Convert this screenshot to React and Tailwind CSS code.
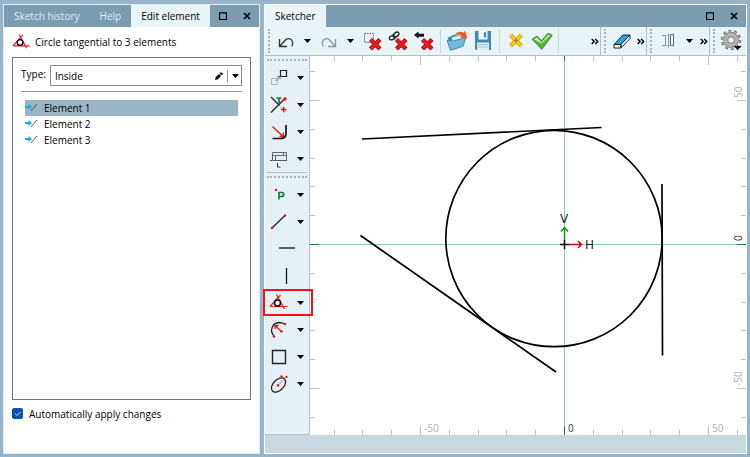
import { useState } from "react";

const elements = ["Element 1", "Element 2", "Element 3"];

const Icon = ({ size = 20, children, className = "" }) => (
    <svg width={size} height={size} viewBox="0 0 20 20" fill="none" aria-hidden="true" className={`shrink-0 ${className}`}>
        {children}
    </svg>
);

const Caret = () => (
    <svg width="7" height="4" viewBox="0 0 7 4" aria-hidden="true">
        <path d="M0 0h7L3.500 4z" fill="#000" />
    </svg>
);

const MaximizeIcon = () => (
    <svg width="8" height="8" viewBox="0 0 8 8" fill="none" aria-hidden="true">
        <path d="M.5 1h7v6.500h-7zM0 .8h8" stroke="#000" strokeWidth="1.2" />
    </svg>
);

const CloseIcon = () => (
    <svg width="8" height="8" viewBox="0 0 8 8" fill="none" aria-hidden="true">
        <path d="M1 1l6 6M7 1L1 7" stroke="#000" strokeWidth="1.7" />
    </svg>
);

const RedCross = () => (
    <>
        <path d="M8.5 8.5l9.5 9.5M18 8.5L8.5 18" stroke="#8d0f12" strokeWidth="4.4" />
        <path d="M8.7 8.7l9 9M17.8 8.7l-9 9" stroke="#e81c1c" strokeWidth="2.8" />
    </>
);

const UndoIcon = () => (
    <Icon>
        <path d="M3.500 8v7.500H11M4 15l5.500-6c2.300-2.300 6.300-1.300 7 1.700.5 1.800.2 3.300-.8 4.800" stroke="#333" strokeWidth="1.300" />
    </Icon>
);

const RedoIcon = () => (
    <Icon>
        <path d="M16.500 8v7.500H9M16 15l-5.500-6c-2.300-2.300-6.300-1.300-7 1.700-.5 1.800-.2 3.300.8 4.800" stroke="#87959c" strokeWidth="1.300" />
    </Icon>
);

const DeleteAreaIcon = () => (
    <Icon>
        <path d="M2.500 2.500h9v9h-9z" stroke="#666" strokeDasharray="1.500 1" />
        <RedCross />
    </Icon>
);

const DeleteLinkIcon = () => (
    <Icon>
        <ellipse cx="8" cy="3.700" rx="3.200" ry="2" transform="rotate(-35 8 3.700)" stroke="#222" strokeWidth="1.400" />
        <ellipse cx="4.200" cy="6.700" rx="3" ry="1.900" transform="rotate(-20 4.200 6.700)" stroke="#222" strokeWidth="1.400" />
        <RedCross />
    </Icon>
);

const DeleteArrowIcon = () => (
    <Icon>
        <path d="M0 4l4.500-3.500v2.300h5.500v3H4.500V7.500z" fill="#111" />
        <RedCross />
    </Icon>
);

const OpenIcon = () => (
    <Icon size={22}>
        <path d="M1.500 7l6-3 2 1 6-1v10l-11 4.500z" fill="#3a8fb7" />
        <path d="M5.500 6.500l9.500-2v8l-9 3z" fill="#dceef6" />
        <path d="M1 9.500l3 9 11.500-3.700 2.500-8L6.500 10z" fill="#74b9dc" stroke="#337fa5" strokeWidth=".8" />
        <path d="M8 5.500C9 1.500 13 .5 16 2.500L17.500.5l1.800 7.200-6.800-1 1.800-1.700C12.500 3.500 10 3.700 8 5.500z" fill="#fa5a12" />
    </Icon>
);

const SaveIcon = () => (
    <Icon>
        <path d="M2 0h16v19H3l-1-1.200z" fill="#3b8db7" />
        <path d="M5.500 0h9v8.500h-9z" fill="#f5f8fa" />
        <path d="M10.800 1.200h2.400v5h-2.400z" fill="#3b8db7" />
        <path d="M4 11.500h12V19H4z" fill="#e2eff5" />
        <path d="M4.500 13.500h11M4.500 16h11" stroke="#a5bfcb" />
    </Icon>
);

const CancelIcon = () => (
    <Icon>
        <path d="M4.500 4l11 11M15.500 4l-11 11" stroke="#c99900" strokeWidth="4" />
        <path d="M4.700 4.200l10.600 10.600M15.300 4.200L4.700 14.800" stroke="#f7cf22" strokeWidth="2.600" />
        <circle cx="10" cy="9.500" r="1.700" fill="#b57e00" />
    </Icon>
);

const ApplyIcon = () => (
    <Icon size={22}>
        <path d="M1 8.500l4.500-3 4 4.300 6-6.800 3.800 1.800-9.500 12.700z" fill="#53b62c" stroke="#3f7f31" strokeWidth=".9" />
        <path d="M2.800 8.500l2.500-1.800 4.200 4.500 6.300-6.800 1.500.8-8 7z" fill="#c9edb3" />
    </Icon>
);

const EraserIcon = () => (
    <Icon>
        <path d="M2 13.500L11 4h7l-9 9.500z" fill="#2ea3ee" stroke="#111" strokeWidth=".9" />
        <path d="M2 13.500h7V17H2zM9 13.500L18 4v3.500L9 17z" fill="#fff" stroke="#111" strokeWidth=".9" />
    </Icon>
);

const MirrorIcon = () => (
    <Icon>
        <path d="M4 4.500h3.500v10H4M10.500 2.500v14" stroke="#8a9296" />
        <path d="M12.500 3.500h3v11h-3z" stroke="#60686c" />
        <path d="M7.500 4.500h5M7.500 14.500h5" stroke="#8a9296" strokeDasharray="1 1" />
    </Icon>
);

const GearIcon = () => (
    <Icon size={22}>
        <circle cx="10" cy="9" r="7.700" stroke="#777" strokeWidth="3.200" strokeDasharray="2.600 2.238" />
        <circle cx="10" cy="9" r="4.800" stroke="#6c6c6c" strokeWidth="4.600" />
        <circle cx="10" cy="9" r="4.800" stroke="#b2b2b2" strokeWidth="3.400" />
        <circle cx="10" cy="9" r="7.500" stroke="#b2b2b2" strokeWidth="1.800" strokeDasharray="1.400 3.312" strokeDashoffset="-.6" />
        <path d="M12.500 14.500h7L16 18.300z" fill="#000" />
    </Icon>
);

const ProjectIcon = () => (
    <Icon>
        <path d="M11.500 2.500h6v6h-6z" stroke="#222" strokeWidth="1.200" />
        <path d="M2.500 10.500h6v6h-6z" stroke="#b0b8bb" />
        <path d="M6.500 13l4.500-4.500M8 8.500h3v3" stroke="#777" />
    </Icon>
);

const TrimIcon = () => (
    <Icon>
        <path d="M2 2l8 8M2 17.500L15.500 4" stroke="#222" strokeWidth="1.300" />
        <path d="M10 10l7 7" stroke="#888" strokeDasharray="1.500 1" />
        <path d="M7.500 3h5M10 3v5.500" stroke="#138030" strokeWidth="1.700" />
        <circle cx="16" cy="4" r="1.800" fill="#e11" />
        <path d="M12 14.500h5.500M14.700 11.700v5.600" stroke="#e11" strokeWidth="1.400" />
    </Icon>
);

const FilletIcon = () => (
    <Icon>
        <path d="M17 3v8c0 3.500-2 5.500-5 5.500H3.500" stroke="#111" strokeWidth="1.700" />
        <path d="M3.500 4.500l10.500 10M10.500 14.500h3.800v-4" stroke="#e11" strokeWidth="1.300" />
    </Icon>
);

const DimensionIcon = () => (
    <Icon>
        <path d="M3.500 3.500h14v8h-14zM3.500 6.500h14M6.500 6.500v5M14.500 3.500v3" stroke="#666" />
        <path d="M1 11.500h18" stroke="#555" strokeDasharray="2 1" />
        <path d="M8.500 14v4h3" stroke="#333" />
    </Icon>
);

const PointIcon = () => (
    <Icon>
        <circle cx="7" cy="5" r="1.200" fill="#e11" />
        <path d="M10 14.500V7.500h2.700c2.700 0 2.700 4 0 4H10" stroke="#138030" strokeWidth="1.700" />
    </Icon>
);

const LineIcon = () => (
    <Icon>
        <path d="M3 16L16 3.500" stroke="#222" strokeWidth="1.300" />
        <circle cx="3" cy="16" r="1.200" fill="#e11" />
        <circle cx="16" cy="3.500" r="1.200" fill="#e11" />
    </Icon>
);

const HorizontalIcon = () => (
    <Icon>
        <path d="M2 9h16" stroke="#111" strokeWidth="1.300" />
    </Icon>
);

const VerticalIcon = () => (
    <Icon>
        <path d="M9.500 2v16" stroke="#111" strokeWidth="1.300" />
    </Icon>
);

const TangentCircleIcon = ({ size }) => (
    <Icon size={size}>
        <path d="M1 13.500L11.500 2M2 13.500h16.500M7.500 1.500L15.500 16" stroke="#ee1a1a" strokeWidth="1.200" />
        <circle cx="8.500" cy="10" r="3" stroke="#111" strokeWidth="1.500" />
    </Icon>
);

const ArcIcon = () => (
    <Icon>
        <path d="M5 16C0 10.500 3.500 3 10 2.500c1.500 0 3.500.3 5.500 1.500" stroke="#222" strokeWidth="1.300" />
        <path d="M12 11L6.500 6M9.500 5.500H6v3.500" stroke="#e11" strokeWidth="1.300" />
        <circle cx="5" cy="16.500" r="1.200" fill="#e11" />
        <circle cx="16" cy="4" r="1.200" fill="#e11" />
        <circle cx="12.500" cy="11.500" r="1.200" fill="#e11" />
    </Icon>
);

const SquareIcon = () => (
    <Icon>
        <path d="M3.500 3.500h13v13h-13z" stroke="#222" strokeWidth="1.400" />
    </Icon>
);

const EllipseIcon = () => (
    <Icon>
        <ellipse cx="9.500" cy="11" rx="8.500" ry="5.300" transform="rotate(-45 9.500 11)" stroke="#222" strokeWidth="1.300" />
        <path d="M9 11.500l4-6M9 11.500l6-5.500" stroke="#888" strokeDasharray="1.500 1" />
        <circle cx="9" cy="11.500" r="1.300" fill="#e11" />
        <circle cx="12.500" cy="2.500" r="1.200" fill="#e11" />
        <circle cx="17.500" cy="3" r="1.200" fill="#e11" />
    </Icon>
);

const ElementIcon = () => (
    <svg width="13" height="10" viewBox="0 0 13 10" fill="none" aria-hidden="true">
        <path d="M0 4h4" stroke="#1ba8ee" strokeWidth="2" />
        <path d="M3.500 1l3.500 3-3.500 3z" fill="#1ba8ee" />
        <path d="M6 8L12 1" stroke="#555" />
    </svg>
);

const TopButton = ({ label, children }) => (
    <button type="button" aria-label={label} className="flex h-full w-[26px] items-center justify-center">
        {children}
    </button>
);

const MenuButton = ({ label }) => (
    <button type="button" aria-label={label} className="flex h-full w-[17px] items-center justify-center">
        <Caret />
    </button>
);

const MoreButton = ({ label }) => (
    <button type="button" aria-label={label} className="flex w-[11px] items-center justify-center">
        <svg width="8" height="7" viewBox="0 0 8 7" fill="none" aria-hidden="true">
            <path d="M.7 1l2.500 2.500L.7 6M4.200 1l2.500 2.500L4.200 6" stroke="#000" strokeWidth="1.400" />
        </svg>
    </button>
);

const Grip = () => <span className="mx-[3px] h-6 w-0 border-l-2 border-dotted border-[#a9b5bc]" />;

const Divider = () => <span className="mx-[3px] h-6 w-px bg-[#cbd6dc]" />;

const tools = [
    { label: "Project geometry", icon: ProjectIcon },
    { label: "Trim", icon: TrimIcon },
    { label: "Fillet", icon: FilletIcon },
    { label: "Dimension", icon: DimensionIcon },
];

const drawTools = [
    { label: "Point", icon: PointIcon },
    { label: "Line", icon: LineIcon },
    { label: "Horizontal line", icon: HorizontalIcon, single: true },
    { label: "Vertical line", icon: VerticalIcon, single: true },
    { label: "Circle", icon: TangentCircleIcon, active: true },
    { label: "Arc", icon: ArcIcon },
    { label: "Rectangle", icon: SquareIcon },
    { label: "Ellipse", icon: EllipseIcon },
];

const ToolRow = ({ tool }) => {
    const ToolIcon = tool.icon;
    return (
        <div className={`relative flex h-[27px] items-center ${tool.single ? "justify-center" : ""}`}>
            <button type="button" aria-label={tool.label} className="flex h-full w-7 items-center justify-center">
                <ToolIcon />
            </button>
            {!tool.single && <MenuButton label={`${tool.label} options`} />}
            {tool.active && <span className="pointer-events-none absolute inset-y-0 -left-0.5 -right-1 z-10 border-2 border-[#fb1018]" />}
        </div>
    );
};

const WindowButtons = () => (
    <div className="flex items-center gap-4 px-2">
        <button type="button" aria-label="Maximize"><MaximizeIcon /></button>
        <button type="button" aria-label="Close"><CloseIcon /></button>
    </div>
);

const EditPanel = () => {
    const [selected, setSelected] = useState(0);
    const [auto, setAuto] = useState(true);

    return (
        <section className="flex w-[257px] shrink-0 flex-col border border-[#dfeaf1] bg-white">
            <div className="flex h-[22px] shrink-0 bg-[#7c9cb0] text-[#e0ecf3]">
                <button type="button" className="px-2.5">Sketch history</button>
                <button type="button" className="px-2.5">Help</button>
                <button type="button" className="bg-[#e9f4f9] px-2.5 text-black">Edit element</button>
                <div className="ml-auto flex"><WindowButtons /></div>
            </div>

            <div className="flex min-h-0 flex-1 flex-col px-2 pb-[26px]">
                <div className="flex h-[30px] items-center gap-1">
                    <TangentCircleIcon size={19} />
                    <h1>Circle tangential to 3 elements</h1>
                </div>

                <div className="min-h-0 flex-1 border border-[#74747e] p-[7px]">
                    <div className="mx-px flex items-center gap-1 border-b border-[#999] pb-[5px]">
                        <label htmlFor="type" className="-mt-1">Type:</label>
                        <div className="relative flex-1">
                            <select id="type" className="block h-[21px] w-full appearance-none border border-[#8d8d8d] bg-white px-1 outline-none">
                                <option>Inside</option>
                                <option>Outside</option>
                            </select>
                            <div className="pointer-events-none absolute inset-y-0 right-[3px] flex items-center gap-1">
                                <svg width="8" height="8" viewBox="0 0 8 8" aria-hidden="true">
                                    <path d="M0 8l.8-3L4 2l2 2-3 3.200zM4.700 1.400L6 0l2 2-1.400 1.300z" fill="#000" />
                                </svg>
                                <span className="h-3 w-px bg-[#999]" />
                                <Caret />
                            </div>
                        </div>
                    </div>

                    <ul className="px-[5px] pt-2">
                        {elements.map((name, index) => (
                            <li key={name}>
                                <button
                                    type="button"
                                    onClick={() => setSelected(index)}
                                    className={`flex h-4 w-full items-center gap-1.5 ${selected === index ? "bg-[#9cb5c3]" : ""}`}
                                >
                                    <ElementIcon />
                                    {name}
                                </button>
                            </li>
                        ))}
                    </ul>
                </div>

                <div className="flex h-[27px] shrink-0 items-center gap-1.5">
                    <span className="relative flex">
                        <input
                            id="auto"
                            type="checkbox"
                            checked={auto}
                            onChange={(e) => setAuto(e.target.checked)}
                            className="size-[11px] appearance-none rounded-xs border border-[#0a52ad] checked:bg-[#0a52ad]"
                        />
                        {auto && (
                            <svg viewBox="0 0 11 11" fill="none" aria-hidden="true" className="pointer-events-none absolute inset-0">
                                <path d="M3 5.500l2 2 3.500-3.500" stroke="#cfe2f7" />
                            </svg>
                        )}
                    </span>
                    <label htmlFor="auto">Automatically apply changes</label>
                </div>
            </div>
        </section>
    );
};

const steps = [-8, -7, -6, -5, -4, -3, -2, -1, 1, 2, 3, 4, 5, 6];

// One ruler step is 10 units, the origin sits at 254,188
const Canvas = () => (
    <svg viewBox="0 0 436 379" preserveAspectRatio="xMaxYMid slice" className="absolute inset-0 size-full" role="img" aria-label="Sketch">
        <g stroke="#bfc4c7">
            {steps.map((n) => {
                const x = Math.round(254 + n * 28.8) + 0.5;
                const length = n % 5 === 0 ? 9 : 5;
                return <path key={n} d={`M${x} 0v${length}M${x} 379v-${length}`} />;
            })}
            {steps.map((n) => {
                const y = Math.round(188 + n * 28.8) + 0.5;
                const length = n % 5 === 0 ? 9 : 5;
                return <path key={n} d={`M0 ${y}h${length}M436 ${y}h-${length}`} />;
            })}
        </g>
        <path d="M254.500 0v379M0 188.500h436" stroke="#83d1a5" />
        <path d="M254.500 0v5M254.500 379v-9M0 188.500h9M436 188.500h-9" stroke="#1d7a4c" />

        <g fontSize="10" fill="#afb2b4">
            <text x="114" y="376">-50</text>
            <text x="402" y="376">50</text>
            <text x="258" y="376" fill="#333">0</text>
            <text transform="translate(432 42) rotate(-90)">50</text>
            <text transform="translate(432 330) rotate(-90)">-50</text>
            <text transform="translate(432 185) rotate(-90)" fill="#333">0</text>
        </g>

        <g stroke="#000" strokeWidth="1.700" fill="none">
            <circle cx="244" cy="182.500" r="108.200" />
            <path d="M52 83l239.500-11.500M50.500 179.500l195.500 136.500M352 128l.5 171.500" />
        </g>

        <path d="M254.500 184v-12M251 175.500l3.500-4 3.500 4" stroke="#0a9a1d" strokeWidth="1.500" fill="none" />
        <path d="M259 188.500h12M268 185l3.500 3.500-3.500 3.500" stroke="#c30d0d" strokeWidth="1.500" fill="none" />
        <path d="M254.500 184v9M250 188.500h9" stroke="#000" strokeWidth="1.500" />
        <g fontFamily="'DejaVu Sans', sans-serif" fontSize="12" fill="#222">
            <text x="250" y="167">V</text>
            <text x="275" y="193">H</text>
        </g>
    </svg>
);

const Sketcher = () => (
    <section className="flex min-w-0 flex-1 flex-col border border-white bg-[#c8d7e0]">
        <div className="flex h-[22px] shrink-0 bg-[#7c9cb0]">
            <button type="button" className="bg-[#e9f4f9] px-2.5">Sketcher</button>
            <div className="ml-auto flex"><WindowButtons /></div>
        </div>

        <div className="flex h-[29px] shrink-0 border-b border-[#b7c0c5] bg-[#e9f4f9]">
            <div className="flex min-w-0 flex-1 items-center border-r border-[#b7c0c5]">
                <Grip />
                <TopButton label="Undo"><UndoIcon /></TopButton>
                <MenuButton label="Undo steps" />
                <TopButton label="Redo"><RedoIcon /></TopButton>
                <MenuButton label="Redo steps" />
                <TopButton label="Delete geometry"><DeleteAreaIcon /></TopButton>
                <TopButton label="Delete constraints"><DeleteLinkIcon /></TopButton>
                <TopButton label="Delete references"><DeleteArrowIcon /></TopButton>
                <Divider />
                <TopButton label="Open"><OpenIcon /></TopButton>
                <TopButton label="Save"><SaveIcon /></TopButton>
                <Divider />
                <TopButton label="Cancel"><CancelIcon /></TopButton>
                <TopButton label="Apply"><ApplyIcon /></TopButton>
                <Divider />
                <div className="ml-auto flex"><MoreButton label="More sketch tools" /></div>
            </div>
            <div className="flex items-center border-r border-[#b7c0c5]">
                <Grip />
                <TopButton label="Erase"><EraserIcon /></TopButton>
                <MoreButton label="More erase tools" />
            </div>
            <div className="flex items-center border-r border-[#b7c0c5]">
                <Grip />
                <TopButton label="Mirror"><MirrorIcon /></TopButton>
                <MenuButton label="Mirror options" />
                <MoreButton label="More mirror tools" />
            </div>
            <div className="flex items-center pr-0.5">
                <Grip />
                <TopButton label="Settings"><GearIcon /></TopButton>
            </div>
        </div>

        <div className="flex min-h-0 flex-1">
            <div className="flex w-[45px] shrink-0 flex-col border-r border-b border-[#b7c0c5] bg-[#e5f1f7]">
                <span className="mx-0.5 my-[3px] border-t-2 border-dotted border-[#a9b5bc]" />
                {tools.map((tool) => <ToolRow key={tool.label} tool={tool} />)}
                <span className="mx-0.5 border-t border-[#b7c0c5]" />
                <span className="mx-0.5 my-[3px] border-t-2 border-dotted border-[#a9b5bc]" />
                {drawTools.map((tool) => <ToolRow key={tool.label} tool={tool} />)}
            </div>
            <main className="relative min-w-0 flex-1 overflow-hidden bg-white">
                <Canvas />
            </main>
        </div>

        <footer className="h-[18px] shrink-0" />
    </section>
);

const App = () => (
    <div className="flex h-screen gap-1 bg-[#97b4ca] px-[3px] pt-1 pb-[3px] font-['Open_Sans',sans-serif] text-[10px] leading-4 text-black">
        <EditPanel />
        <Sketcher />
    </div>
);

export default App;
